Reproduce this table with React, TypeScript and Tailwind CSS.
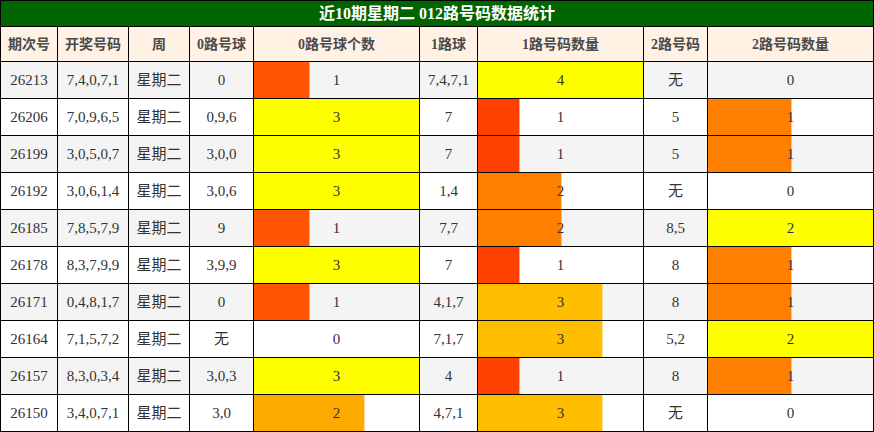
type Row = {
  issue: string
  nums: string
  zero: string
  zeroCount: number
  one: string
  oneCount: number
  two: string
  twoCount: number
}

const rows: Row[] = [
  { issue: '26213', nums: '7,4,0,7,1', zero: '0', zeroCount: 1, one: '7,4,7,1', oneCount: 4, two: '无', twoCount: 0 },
  { issue: '26206', nums: '7,0,9,6,5', zero: '0,9,6', zeroCount: 3, one: '7', oneCount: 1, two: '5', twoCount: 1 },
  { issue: '26199', nums: '3,0,5,0,7', zero: '3,0,0', zeroCount: 3, one: '7', oneCount: 1, two: '5', twoCount: 1 },
  { issue: '26192', nums: '3,0,6,1,4', zero: '3,0,6', zeroCount: 3, one: '1,4', oneCount: 2, two: '无', twoCount: 0 },
  { issue: '26185', nums: '7,8,5,7,9', zero: '9', zeroCount: 1, one: '7,7', oneCount: 2, two: '8,5', twoCount: 2 },
  { issue: '26178', nums: '8,3,7,9,9', zero: '3,9,9', zeroCount: 3, one: '7', oneCount: 1, two: '8', twoCount: 1 },
  { issue: '26171', nums: '0,4,8,1,7', zero: '0', zeroCount: 1, one: '4,1,7', oneCount: 3, two: '8', twoCount: 1 },
  { issue: '26164', nums: '7,1,5,7,2', zero: '无', zeroCount: 0, one: '7,1,7', oneCount: 3, two: '5,2', twoCount: 2 },
  { issue: '26157', nums: '8,3,0,3,4', zero: '3,0,3', zeroCount: 3, one: '4', oneCount: 1, two: '8', twoCount: 1 },
  { issue: '26150', nums: '3,4,0,7,1', zero: '3,0', zeroCount: 2, one: '4,7,1', oneCount: 3, two: '无', twoCount: 0 },
]

const headers = ['期次号', '开奖号码', '周', '0路号球', '0路号球个数', '1路球', '1路号码数量', '2路号码', '2路号码数量']

const FONT = { fontFamily: '"Liberation Serif", "Noto Sans CJK SC", serif' }

function BarCell({ count, max, bg }: { count: number; max: number; bg: string }) {
  const frac = count / max
  const color = `rgb(255, ${Math.round(255 * frac)}, 0)`
  const edge = `rgba(255, ${Math.round(255 * frac)}, 0, 0.45)`
  return (
    <div className={`relative flex items-center justify-center ${bg}`}>
      {count > 0 && (
        <div
          className="absolute left-0 top-0 bottom-0"
          style={{ width: `${frac * 100}%`, background: color, boxShadow: frac < 1 ? `1px 0 0 ${edge}` : undefined }}
        />
      )}
      <span className="relative">{count}</span>
    </div>
  )
}

function Cell({ children, bg }: { children: React.ReactNode; bg: string }) {
  return <div className={`flex items-center justify-center ${bg}`}>{children}</div>
}

export default function App() {
  return (
    <div className="w-[874px] h-[432px] bg-white" style={FONT}>
      <div className="grid grid-cols-[56px_70px_60px_63px_165px_57px_165px_63px_165px] grid-rows-[25px_34px_repeat(10,36px)] gap-px bg-black p-px text-[15px] text-[#333]">
        <div className="col-span-9 flex items-center justify-center bg-[#006400] text-white font-bold text-[16px]">
          近10期星期二 012路号码数据统计
        </div>
        {headers.map((h) => (
          <div key={h} className="flex items-center justify-center bg-[#fff1e4] font-bold text-[14px] text-[#4a4a4a]">
            {h}
          </div>
        ))}
        {rows.map((r, i) => {
          const bg = i % 2 === 0 ? 'bg-[#f4f4f4]' : 'bg-white'
          return (
            <div key={r.issue} className="contents">
              <Cell bg={bg}>{r.issue}</Cell>
              <Cell bg={bg}>{r.nums}</Cell>
              <Cell bg={bg}>星期二</Cell>
              <Cell bg={bg}>{r.zero}</Cell>
              <BarCell count={r.zeroCount} max={3} bg={bg} />
              <Cell bg={bg}>{r.one}</Cell>
              <BarCell count={r.oneCount} max={4} bg={bg} />
              <Cell bg={bg}>{r.two}</Cell>
              <BarCell count={r.twoCount} max={2} bg={bg} />
            </div>
          )
        })}
      </div>
    </div>
  )
}
